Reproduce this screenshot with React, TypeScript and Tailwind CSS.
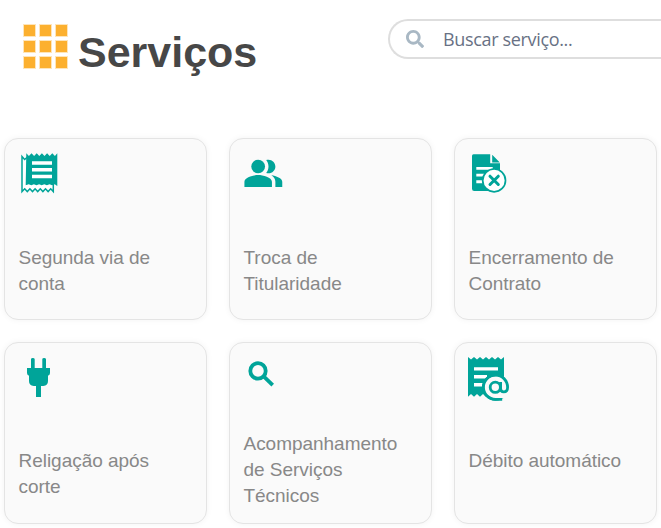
import type { ReactNode } from "react"
import { FaSearch } from "react-icons/fa"

const receiptEdge = "l2.6 2.6 2.6-2.6 2.6 2.6 2.6-2.6 2.6 2.6 2.6-2.6 2.6 2.6 2.6-2.6 2.6 2.6 2.6-2.6 2.6 2.6 2.4-2.6"

function Icon({ children }: { children: ReactNode }) {
  return (
    <svg viewBox="0 0 48 48" className="w-12 h-12 shrink-0 overflow-visible fill-[#00a499]">
      {children}
    </svg>
  )
}

function BillIcon() {
  return (
    <Icon>
      <path
        d="M6 6.5l2.6 3 3-2.6H37.3V41.6l-2.6-2.8-2.6 2.8-2.6-2.8-2.6 2.8-2.6-2.8-2.6 2.8-2.6-2.8-2.6 2.8-2.6-2.8-2.6 2.8-2.6-2.8L6 41.6z"
        className="fill-white stroke-[#00a499] [stroke-width:1.5]"
      />
      <path d={"M10.3 3.3" + receiptEdge + "v32.7l-2.6-1.8-2.6 1-2.6-1-2.6 1-2.6-1-2.6 1-2.6-1-2.6 1-2.6-1-2.6 1-2.6-1-3 1z"} />
      <path d="M16 11.2h20v3.6H16zM16 17.9h20v3.5H16zM16 24.7h20v3.5H16z" className="fill-white" />
    </Icon>
  )
}

function PeopleIcon() {
  return (
    <Icon>
      <g transform="translate(1.7 2.8) scale(1.72 1.71)">
        <path d="M16.67 13.13C18.04 14.06 19 15.32 19 17v3h4v-3c0-2.18-3.57-3.47-6.33-3.87z" />
        <circle cx="9" cy="8" r="4" />
        <path d="M15 12c2.21 0 4-1.79 4-4s-1.79-4-4-4c-.47 0-.91.1-1.33.24C14.5 5.27 15 6.58 15 8s-.5 2.73-1.33 3.76c.42.14.86.24 1.33.24zM9 13c-2.67 0-8 1.34-8 4v3h16v-3c0-2.66-5.33-4-8-4z" />
      </g>
    </Icon>
  )
}

function CloseContractIcon() {
  return (
    <Icon>
      <path d="M7.5 4.3h16.7v8.9H34V41H8.2Q6 41 6 38.8V6Q6 4.3 7.5 4.3zM26.2 4.7l7.6 7.8h-7.6z" />
      <path d="M10.3 17h16.4v2.7H10.3zM10.3 23.7h8v2.7h-8zM10.3 30.2h7v3h-7z" className="fill-white" />
      <circle cx="28.1" cy="30.4" r="11.4" className="fill-white stroke-[#00a499] [stroke-width:1.7]" />
      <path d="M24 26.2l8.3 8.3M32.3 26.2L24 34.5" className="fill-none stroke-[#00a499] [stroke-width:3] [stroke-linecap:round]" />
    </Icon>
  )
}

function PlugIcon() {
  return (
    <Icon>
      <path d="M15 14V5.2Q15 4 16.8 4t1.9 1.2V14h7.6V5.2Q26.3 4 28.1 4T30 5.2V14h4v5q0 2-2 2.8V27q0 4.7-4.7 5H25v11h-5V32h-2.3Q13 31.7 13 27v-5.2Q11 21 11 19v-5z" />
    </Icon>
  )
}

function LensIcon() {
  return (
    <Icon>
      <g className="fill-none stroke-[#00a499] [stroke-width:3.8]">
        <circle cx="17" cy="16.9" r="7.7" />
        <path d="M22.4 22.2l9.3 9" />
      </g>
    </Icon>
  )
}

function AutoDebitIcon() {
  return (
    <Icon>
      <path d="M2 3l3 2.6L8 3l3 2.6L14 3l3 2.6L20 3l3 2.6L26 3l3 2.6L32 3l3 2.6L38 3v39.7l-3-2.6-3 2.6-3-2.6-3 2.6-3-2.6-3 2.6-3-2.6-3 2.6-3-2.6-3 2.6-3-2.6-3 2.6z" />
      <path d="M8 13.2h24v3.4H8zM8 21h13v3.6H8zM8 29h9v3.6H8z" className="fill-white" />
      <circle cx="29.5" cy="33.3" r="13.5" className="fill-[#00a499]" />
      <path d="M29.5 22.2a11.1 11.1 0 1 0 0 22.2h14V33.3a11.1 11.1 0 0 0-14-11.1z" className="fill-[#fafafa]" />
      <g className="fill-none stroke-[#00a499] [stroke-width:2.8]">
        <circle cx="29.3" cy="33.3" r="5.1" />
        <path d="M34.6 28v6.5q0 3.4 3.1 3.4 3.9 0 3.9-4.6A12.1 12.1 0 1 0 29.5 45.4h6.7" />
      </g>
    </Icon>
  )
}

const services = [
  { name: "Segunda via de conta", icon: <BillIcon />, label: "mt-[47px] w-[145px]" },
  { name: "Troca de Titularidade", icon: <PeopleIcon />, label: "mt-[47px] w-[120px]" },
  { name: "Encerramento de Contrato", icon: <CloseContractIcon />, label: "mt-[47px] w-[160px]" },
  { name: "Religação após corte", icon: <PlugIcon />, label: "mt-[46px] w-[150px]" },
  { name: "Acompanhamento de Serviços Técnicos", icon: <LensIcon />, label: "mt-[29px] w-[165px]" },
  { name: "Débito automático", icon: <AutoDebitIcon />, label: "mt-[46px] w-[170px]" },
]

export default function App() {
  return (
    <main className="w-[661px] h-[528px] overflow-hidden bg-white font-['Liberation_Sans',Arial,sans-serif]">
      <header className="flex items-start justify-between h-[138px] pl-6">
        <div className="flex items-start">
          <div className="grid grid-cols-3 gap-[5px] mt-[25px]">
            {Array.from({ length: 9 }, (_, i) => (
              <span key={i} className="size-[11px] bg-[#fcb02f] shadow-[0_0_0_1px_#fcb02f55]" />
            ))}
          </div>
          <h1 className="mt-[28px] ml-[11px] text-[43px] leading-[48px] font-bold text-[#474747]">Serviços</h1>
        </div>

        <label className="flex items-center mt-[19px] w-[273px] h-10 pl-4 rounded-l-full border-2 border-r-0 border-[#dedede]">
          <FaSearch className="size-[18px] text-[#a9b8c4]" />
          <span className="ml-[19px] font-['Open_Sans',sans-serif] text-[18px] tracking-[-0.34px] text-[#687184]">Buscar serviço...</span>
        </label>
      </header>

      {/* Service cards */}
      <section className="grid grid-cols-[repeat(3,203px)] auto-rows-[182px] gap-[22px] pl-1">
        {services.map((service) => (
          <article
            key={service.name}
            className="flex flex-col pt-[11px] pl-[11px] bg-[#fafafa] border border-[#e4e4e4] rounded-[14px] shadow-[0_0_6px_rgba(0,0,0,0.05)]"
          >
            {service.icon}
            <h2 className={`ml-[2.5px] text-[19px] leading-[26px] tracking-[-0.03px] text-[#888] ${service.label}`}>{service.name}</h2>
          </article>
        ))}
      </section>
    </main>
  )
}
